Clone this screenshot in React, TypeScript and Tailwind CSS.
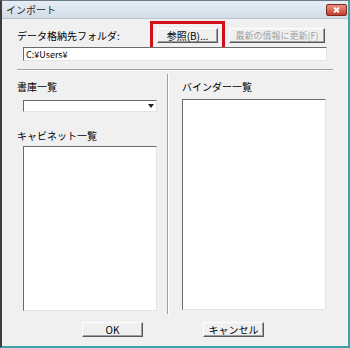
import React from 'react';

/* ── raised Win7-ish push button ── */
function PushButton({ label, disabled, className }: { label: string; disabled?: boolean; className?: string }) {
  return (
    <div
      className={
        'flex items-center justify-center h-[15px] bg-[#f0f0f0] border border-t-white border-l-white border-r-[#5a5a5a] border-b-[#5a5a5a] shadow-[inset_-1px_-1px_0_#a0a0a0] leading-none whitespace-nowrap ' +
        (disabled ? 'text-[#a0a0a0] text-[9px] ' : 'text-black text-[10px] ') +
        (className ?? '')
      }
    >
      {label}
    </div>
  );
}

/* ── sunken white box (edit / list) ── */
function Sunken({ className, children }: { className?: string; children?: React.ReactNode }) {
  return (
    <div
      className={
        'bg-white border border-t-[#6a6a6a] border-l-[#6a6a6a] border-r-[#e4e4e4] border-b-[#e4e4e4] ' +
        (className ?? '')
      }
    >
      {children}
    </div>
  );
}

export default function App() {
  return (
    <div
      className="w-[350px] h-[348px] flex flex-col bg-[#f0f0f0] border-l-2 border-t border-l-[#3c3c3c] border-t-[#6c7a88] border-r-2 border-b-2 border-r-[#3aa3ab] border-b-[#3aa3ab] text-black"
      style={{ fontFamily: '"Noto Sans CJK JP", "Noto Sans", sans-serif' }}
    >
      {/* ── Title bar ── */}
      <div className="h-[18px] shrink-0 flex items-center justify-between pl-[4px] pr-[1px] bg-gradient-to-b from-[#e6edf4] to-[#d3dde8] border-b border-[#b9c4cf]">
        <span className="text-[10px] leading-none text-[#2a2a2a]">インポート</span>
        <div className="w-[21px] h-[12px] rounded-[2px] border border-[#7a2a22] bg-gradient-to-b from-[#e8907f] to-[#c8382a] flex items-center justify-center">
          <svg width="7" height="6" viewBox="0 0 7 6">
            <path d="M1 0.5 L6 5.5 M6 0.5 L1 5.5" stroke="white" strokeWidth="1.8" />
          </svg>
        </div>
      </div>

      {/* ── Body ── */}
      <div className="flex-1 flex flex-col pl-[15px] pr-[15px]">
        {/* folder row */}
        <div className="flex items-center mt-[9px] h-[15px]">
          <span className="w-[140px] text-[10px] leading-none">データ格納先フォルダ:</span>
          <PushButton
            label="参照(B)..."
            className="w-[61px] outline-[3px] outline-solid outline-[#d0111c] outline-offset-[4px]"
          />
          <PushButton label="最新の情報に更新(F)" disabled className="w-[96px] ml-[11px]" />
        </div>

        <Sunken className="ml-[6px] mr-[6px] mt-[4px] h-[14px] flex items-center pl-[2px]">
          <span className="text-[9px] leading-none">C:¥Users¥</span>
        </Sunken>

        <div className="mt-[8px] h-[2px] border-t border-t-[#a0a0a0] border-b border-b-white" />

        {/* two columns */}
        <div className="flex mt-[3px]">
          <div className="w-[140px] flex flex-col">
            <span className="mt-[8px] text-[10px] leading-none">書庫一覧</span>
            <Sunken className="ml-[6px] mt-[8px] h-[12px] flex justify-end items-center pr-[2px]">
              <svg width="6" height="4" viewBox="0 0 6 4">
                <path d="M0 0 H6 L3 4 Z" fill="#222" />
              </svg>
            </Sunken>
            <span className="mt-[19px] text-[10px] leading-none">キャビネット一覧</span>
            <Sunken className="ml-[6px] mt-[5px] h-[165px]" />
          </div>

          <div className="ml-[10px] w-[2px] h-[240px] border-l border-l-[#a0a0a0] border-r border-r-white" />

          <div className="ml-[13px] w-[144px] flex flex-col">
            <span className="mt-[8px] text-[10px] leading-none">バインダー一覧</span>
            <Sunken className="mt-[7px] h-[211px]" />
          </div>
        </div>

        {/* bottom buttons */}
        <div className="flex mt-[8px]">
          <PushButton label="OK" className="ml-[65px] w-[61px]" />
          <PushButton label="キャンセル" className="ml-[60px] w-[61px]" />
        </div>
      </div>
    </div>
  );
}
